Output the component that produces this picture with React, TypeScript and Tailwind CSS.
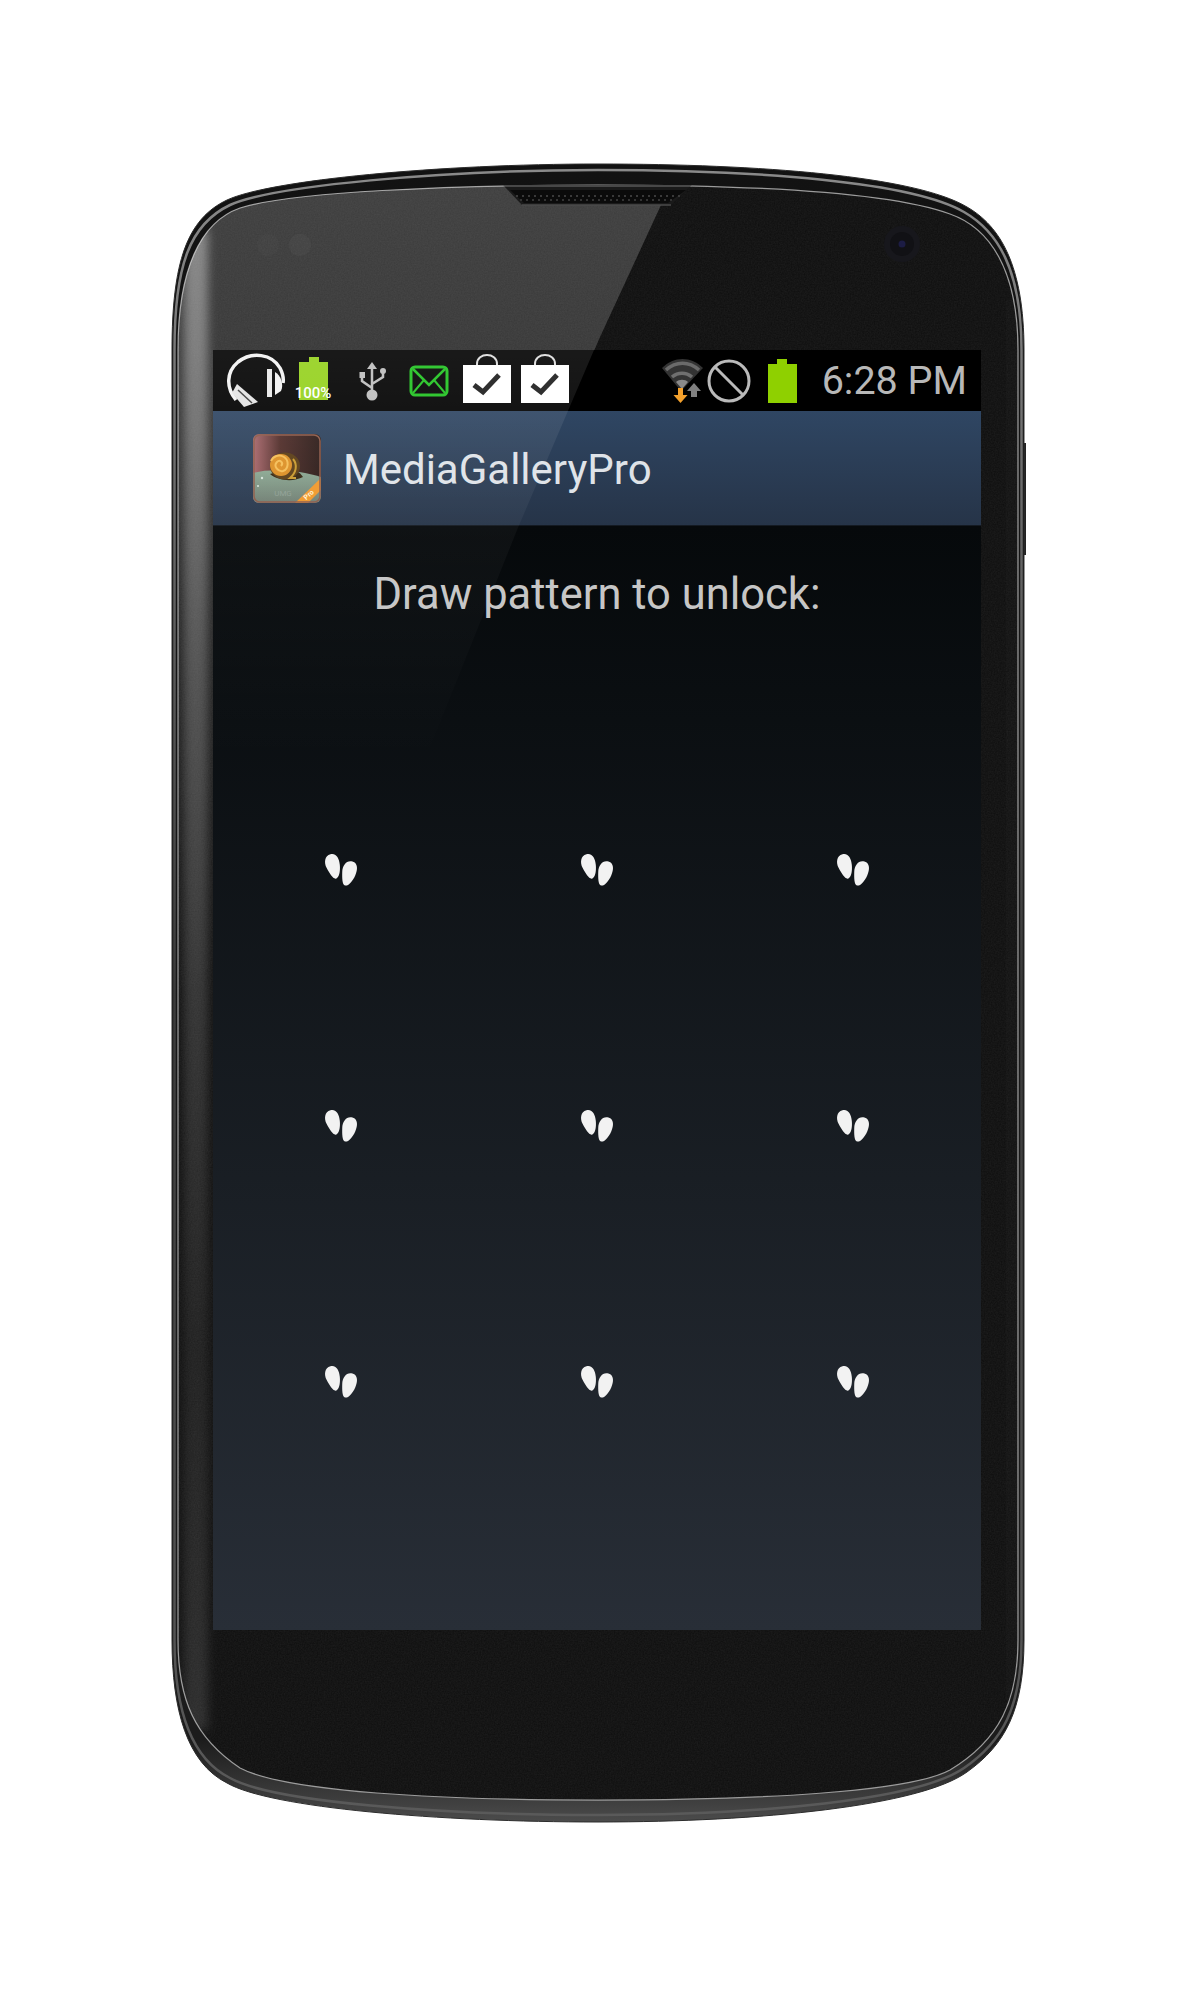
const OUTER =
  'M172 1640 L172 350 C172 262 187 219 227 200 C270 180 440 164 598 164 C760 164 915 176 967 207 C1000 226 1024 265 1024 350 L1024 1640 C1024 1710 1005 1745 967 1772 C920 1806 760 1822 598 1822 C440 1822 270 1808 227 1783 C187 1763 172 1710 172 1640 Z'
const MID =
  'M174.5 1640 L174.5 350 C174.5 265 190 224 230 205 C272 186 440 170 598 170 C760 170 912 182 964 212 C997 231 1021.5 268 1021.5 350 L1021.5 1640 C1021.5 1708 1002 1742 964 1768 C918 1800 760 1815 598 1815 C440 1815 272 1802 230 1778 C190 1758 174.5 1708 174.5 1640 Z'
const INNER =
  'M178 1640 L178 350 C178 270 200 222 240 208 C290 192 450 185 598 185 C750 185 890 192 950 214 C990 228 1018 270 1018 350 L1018 1640 C1018 1700 1000 1740 950 1770 C910 1792 760 1800 598 1800 C440 1800 285 1792 240 1768 C195 1738 178 1700 178 1640 Z'

function PhoneBody() {
  return (
    <svg className="absolute inset-0" width="856" height="1662" viewBox="171 163 856 1662">
      <defs>
        <linearGradient id="shell" x1="0" y1="0" x2="0" y2="1">
          <stop offset="0" stopColor="#121212" />
          <stop offset="0.95" stopColor="#1c1c1c" />
          <stop offset="0.985" stopColor="#3c3c3c" />
          <stop offset="1" stopColor="#4c4c4c" />
        </linearGradient>
        <linearGradient id="band" x1="0" y1="0" x2="0" y2="1">
          <stop offset="0" stopColor="#8a8a8a" />
          <stop offset="0.5" stopColor="#3a3a3a" />
          <stop offset="1" stopColor="#5a5a5a" />
        </linearGradient>
        <linearGradient id="sheen" x1="0" y1="0" x2="0" y2="1">
          <stop offset="0" stopColor="#ffffff" stopOpacity="0.2" />
          <stop offset="0.25" stopColor="#ffffff" stopOpacity="0.17" />
          <stop offset="0.55" stopColor="#ffffff" stopOpacity="0.08" />
          <stop offset="1" stopColor="#ffffff" stopOpacity="0" />
        </linearGradient>
        <linearGradient id="streak" x1="0" y1="0" x2="0" y2="1">
          <stop offset="0" stopColor="#ffffff" stopOpacity="0.38" />
          <stop offset="0.3" stopColor="#ffffff" stopOpacity="0.22" />
          <stop offset="0.75" stopColor="#ffffff" stopOpacity="0.07" />
          <stop offset="1" stopColor="#ffffff" stopOpacity="0.12" />
        </linearGradient>
        <clipPath id="glass">
          <path d={INNER} />
        </clipPath>
        <filter id="soft" x="-50%" y="-5%" width="200%" height="110%">
          <feGaussianBlur stdDeviation="5" />
        </filter>
        <filter id="grain">
          <feTurbulence type="fractalNoise" baseFrequency="0.7" numOctaves="2" seed="4" />
          <feColorMatrix values="0 0 0 0 1 0 0 0 0 1 0 0 0 0 1 0 0 0 0.07 0" />
        </filter>
      </defs>

      {/* shell and metal band */}
      <rect x="1023" y="443" width="3" height="112" fill="#222222" />
      <path d={OUTER} fill="url(#shell)" stroke="#2c2c2c" strokeWidth="1" />
      <path d={MID} fill="none" stroke="url(#band)" strokeWidth="2.5" />

      {/* glass */}
      <path d={INNER} fill="#0d0d0d" stroke="#9a9a9a" strokeWidth="1.25" />
      <g clipPath="url(#glass)">
        <rect x="171" y="163" width="856" height="1662" filter="url(#grain)" />
        <polygon points="178,180 692,180 661,205 600,337 517,530 425,730 178,1000" fill="url(#sheen)" />
        <rect x="184" y="230" width="24" height="1500" fill="url(#streak)" filter="url(#soft)" />
        <rect x="1006" y="300" width="12" height="1400" fill="#ffffff" opacity="0.015" />
      </g>

      {/* speaker */}
      <polygon points="503,185 692,185 671,205 522,205" fill="#1a1a1a" />
      <polygon points="510,190 686,190 668,203 524,203" fill="#0b0b0b" />
      <line x1="503" y1="186" x2="692" y2="186" stroke="#777777" strokeWidth="1" />
      <line x1="522" y1="205" x2="671" y2="205" stroke="#4b4b4b" strokeWidth="1.5" />
      <line x1="516" y1="196" x2="680" y2="196" stroke="#3a3a3a" strokeWidth="2" strokeDasharray="2 4" />
      <line x1="520" y1="200" x2="674" y2="200" stroke="#333333" strokeWidth="2" strokeDasharray="2 4" />

      {/* sensors and camera */}
      <circle cx="268" cy="245" r="11" fill="#ffffff" opacity="0.02" />
      <circle cx="300" cy="245" r="11" fill="#ffffff" opacity="0.03" />
      <circle cx="902" cy="244" r="18" fill="#17171c" />
      <circle cx="902" cy="244" r="12" fill="#111115" />
      <circle cx="902" cy="244" r="3.5" fill="#1c1c44" />
    </svg>
  )
}

function GlassOverlay() {
  return (
    <svg
      className="absolute inset-0 pointer-events-none"
      width="856"
      height="1662"
      viewBox="171 163 856 1662"
    >
      <defs>
        <linearGradient id="overlay" gradientUnits="userSpaceOnUse" x1="0" y1="350" x2="0" y2="760">
          <stop offset="0" stopColor="#ffffff" stopOpacity="0.1" />
          <stop offset="0.45" stopColor="#ffffff" stopOpacity="0.035" />
          <stop offset="1" stopColor="#ffffff" stopOpacity="0" />
        </linearGradient>
      </defs>
      <polygon points="213,350 594,350 517,530 425,760 213,760" fill="url(#overlay)" />
    </svg>
  )
}

function Headphones() {
  return (
    <svg width="62" height="58" viewBox="224 350 62 58" fill="none">
      <path d="M236 398 C226 386 226 370 238 360 C252 349 272 352 280 366 C283 372 284 376 283 381" stroke="#f2f2f2" strokeWidth="3.5" />
      <rect x="267" y="367" width="5" height="28" fill="#e8e8e8" />
      <path d="M275 370 C281 373 284 383 281 389 L275 393 Z" fill="#f2f2f2" />
      <polygon points="237,382 258,400 244,405 232,391" fill="#e4e4e4" />
      <path d="M238 388 L252 401" stroke="#3a3a3a" strokeWidth="1.5" />
    </svg>
  )
}

function BatteryFull() {
  return (
    <svg width="40" height="50" viewBox="294 358 40 50">
      <rect x="309" y="359" width="10" height="6" fill="#94d11c" />
      <rect x="299" y="364" width="29" height="38" fill="#94d11c" />
      <text x="313" y="400" textAnchor="middle" fontSize="15" fontWeight="500" fill="#ffffff" fontFamily="Roboto, sans-serif">
        100%
      </text>
    </svg>
  )
}

function Usb() {
  return (
    <svg width="30" height="42" viewBox="358 359 30 42" fill="none">
      <path d="M372 361 L367 368 L377 368 Z" fill="#bdbdbd" />
      <path d="M372 366 V392 M362 376 V380 L372 387 M383 372 V376 L372 383" stroke="#bdbdbd" strokeWidth="2.5" />
      <rect x="359.5" y="371" width="5.5" height="6" fill="#bdbdbd" />
      <circle cx="383" cy="370" r="3" fill="#bdbdbd" />
      <circle cx="372" cy="394" r="5.5" fill="#bdbdbd" />
    </svg>
  )
}

function Mail() {
  return (
    <svg width="42" height="36" viewBox="408 362 42 36" fill="none" stroke="#1fc21f">
      <rect x="411" y="366" width="36" height="28" rx="4" strokeWidth="3" />
      <path d="M413 368 L429 384 L445 368" strokeWidth="2.5" />
      <path d="M413 392 L424 379 M445 392 L434 379" strokeWidth="2" />
    </svg>
  )
}

function Bag() {
  return (
    <svg width="50" height="52" viewBox="0 0 50 52" fill="none">
      <path d="M15 14 V11 C15 -1 35 -1 35 11 V14" stroke="#dddddd" strokeWidth="2" />
      <rect x="1" y="12" width="48" height="38" fill="#ffffff" />
      <path d="M12 32 L21 39 L37 22" stroke="#1c1c1c" strokeWidth="5" />
    </svg>
  )
}

function WifiIcon() {
  return (
    <svg width="46" height="46" viewBox="661 357 46 46" fill="none">
      <path d="M664 367 C676 355 693 355 705 367 L683 390 Z" fill="#333333" />
      <path d="M668 369 C678 360 691 360 701 369" stroke="#6a6a6a" strokeWidth="3.5" />
      <path d="M674 376 C680 371 688 371 694 376" stroke="#6f6f6f" strokeWidth="3.5" />
      <path d="M678 381 C681 378 687 378 690 381 L684 388 Z" fill="#8a8a8a" />
      <path d="M696 382 L703 390 H699 V396 H693 V390 H689 Z" fill="#808080" />
      <path d="M680 387 H685 V394 H689.5 L682.5 402 L675.5 394 H680 Z" fill="#f3a02c" />
    </svg>
  )
}

function NoSign() {
  return (
    <svg width="44" height="44" viewBox="709 356 44 44" fill="none" stroke="#bababa" strokeWidth="3">
      <circle cx="731" cy="378" r="20" />
      <path d="M717 364 L745 392" />
    </svg>
  )
}

function BatteryPlain() {
  return (
    <svg width="30" height="44" viewBox="770 359 30 44">
      <rect x="779" y="359" width="10" height="6" fill="#8fd000" />
      <rect x="770" y="364" width="29" height="39" fill="#8fd000" />
    </svg>
  )
}

function AppIcon() {
  return (
    <svg width="68" height="69" viewBox="253 434 68 69">
      <defs>
        <linearGradient id="iconTop" x1="0" y1="0" x2="1" y2="0">
          <stop offset="0" stopColor="#a9676c" />
          <stop offset="0.4" stopColor="#4f2c28" />
          <stop offset="1" stopColor="#2a1a17" />
        </linearGradient>
        <linearGradient id="iconLeaf" x1="0" y1="0" x2="0" y2="1">
          <stop offset="0" stopColor="#8aa892" />
          <stop offset="1" stopColor="#6f7d72" />
        </linearGradient>
        <clipPath id="iconClip">
          <rect x="253" y="434" width="68" height="69" rx="6" />
        </clipPath>
      </defs>
      <g clipPath="url(#iconClip)">
        <rect x="253" y="434" width="68" height="69" fill="url(#iconTop)" />
        <path d="M253 473 C270 468 300 470 321 477 V503 H253 Z" fill="url(#iconLeaf)" />
        <path d="M270 474 C278 481 294 482 303 477 C299 470 290 468 284 470 Z" fill="#33240f" />
        <ellipse cx="285" cy="466" rx="15" ry="13.5" fill="#5a3c14" />
        <circle cx="281" cy="465" r="11" fill="#dc8f24" />
        <path d="M281 466 C284 463 280 459 277 462 C273 466 278 472 283 471 C289 469 289 460 284 457 C279 454 273 456 271 461" fill="none" stroke="#f5bd55" strokeWidth="2" />
        <path d="M293 459 C298 465 296 473 290 478 L296 478" fill="none" stroke="#c99a2c" strokeWidth="2" />
        <circle cx="262" cy="478" r="1.2" fill="#d8e6dc" />
        <circle cx="258" cy="486" r="1" fill="#d8e6dc" />
        <polygon points="295,503 321,478 321,490 308,503" fill="#f0982a" />
        <text x="309" y="497" fontSize="7" fontWeight="700" fill="#fff3d8" textAnchor="middle" transform="rotate(-43 309 495)" fontFamily="Roboto, sans-serif">
          Pro
        </text>
        <text x="283" y="496" fontSize="8" fill="#8f9f94" textAnchor="middle" fontFamily="Roboto, sans-serif">
          UMG
        </text>
      </g>
      <rect x="254" y="435" width="66" height="67" rx="6" fill="none" stroke="#8d5a48" strokeWidth="1.5" />
    </svg>
  )
}

function Feet() {
  const foot = 'M0.5 -12.5 C6.5 -12.5 8 -6 7 0 C6 7 3 12.5 0 12.5 C-3 12.5 -5 6 -6.5 0 C-8 -6 -5.5 -12.5 0.5 -12.5 Z'
  return (
    <svg width="40" height="40" viewBox="-20 -20 40 40" fill="#f2f2f2">
      <defs>
        <filter id="footBlur">
          <feGaussianBlur stdDeviation="0.6" />
        </filter>
      </defs>
      <g filter="url(#footBlur)">
        <path d={foot} transform="translate(-8 -3.5) rotate(-14)" />
        <path d={foot} transform="translate(7.5 3.5) rotate(16)" />
      </g>
    </svg>
  )
}

export default function App() {
  return (
    <div className="w-[1195px] h-[1994px] bg-white pt-[163px] pl-[171px] overflow-hidden [font-family:Roboto,sans-serif]">
      <div className="relative w-[856px] h-[1662px] pt-[187px] pl-[42px]">
        <PhoneBody />
        <div className="relative w-[768px] h-[1280px] flex flex-col">
          {/* status bar */}
          <div className="h-[61px] bg-black flex items-center justify-between pl-[11px] pr-[14px]">
            <div className="flex items-center">
              <Headphones />
              <div className="ml-[8px]"><BatteryFull /></div>
              <div className="ml-[24px]"><Usb /></div>
              <div className="ml-[20px]"><Mail /></div>
              <div className="ml-[12px] -mt-[4px]"><Bag /></div>
              <div className="ml-[8px] -mt-[4px]"><Bag /></div>
            </div>
            <div className="flex items-center">
              <WifiIcon />
              <div className="ml-[2px]"><NoSign /></div>
              <div className="ml-[17px]"><BatteryPlain /></div>
              <span className="ml-[24px] text-[39.5px] leading-none text-[#b8b8b8]">6:28 PM</span>
            </div>
          </div>

          {/* action bar */}
          <div className="h-[115px] flex items-center pl-[40px] bg-gradient-to-b from-[#2f4663] to-[#263448] border-b border-[#141a22]">
            <AppIcon />
            <span className="ml-[22px] mt-[4px] text-[42px] leading-none text-[#dfe3e8]">MediaGalleryPro</span>
          </div>

          {/* pattern lock */}
          <div className="flex-1 flex flex-col bg-gradient-to-b from-[#06090b] to-[#282e37]">
            <div className="h-[216px] pt-[45px] text-center text-[43.5px] leading-[48px] text-[#c6c6c6]">
              Draw pattern to unlock:
            </div>
            <div className="grid grid-cols-3 auto-rows-[256px]">
              {Array.from({ length: 9 }).map((_, i) => (
                <div key={i} className="flex items-center justify-center">
                  <Feet />
                </div>
              ))}
            </div>
          </div>
        </div>
        <GlassOverlay />
      </div>
    </div>
  )
}
